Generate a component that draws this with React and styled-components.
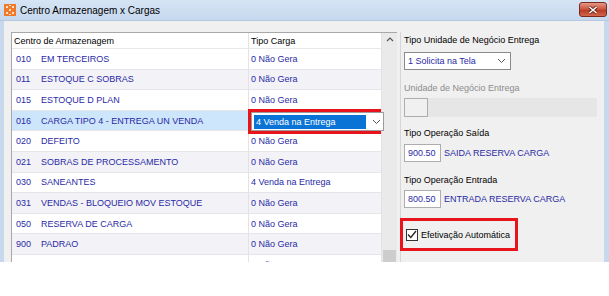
import React from "react";
import styled, { createGlobalStyle } from "styled-components";

const Global = createGlobalStyle`
  html, body {
    margin: 0;
    padding: 0;
    background: #fff;
  }
  body {
    font-family: "Liberation Sans", Arial, sans-serif;
    font-size: 9px;
  }
`;

const Window = styled.div`
  width: 609px;
  height: 262px;
  display: flex;
  flex-direction: column;
  overflow: hidden;
`;

const TitleBar = styled.div`
  height: 21px;
  flex: none;
  display: flex;
  align-items: center;
  padding: 0 2px 0 4px;
  background: linear-gradient(#d6e4f4, #c6d8ee);
  border-bottom: 1px solid #b4c8e0;
  box-sizing: border-box;
`;

const Title = styled.span`
  margin-left: 4px;
  font-size: 10px;
  color: #000;
  flex: 1;
`;

const CloseBtn = styled.div`
  width: 28px;
  height: 15px;
  border: 1px solid #7d2a1e;
  border-radius: 3px;
  box-sizing: border-box;
  background: linear-gradient(#e39a88, #c8503a 50%, #b8351f 51%, #d0674e);
  display: flex;
  align-items: center;
  justify-content: center;
  margin-top: -1px;
`;

const Frame = styled.div`
  flex: 1;
  display: flex;
  border-left: 4px solid #c8d9ee;
  border-right: 5px solid #c8d9ee;
  overflow: hidden;
`;

const Body = styled.div`
  flex: 1;
  display: flex;
  align-items: flex-start;
  background: #f0f0f0;
  padding: 11px 0 0 7px;
  overflow: hidden;
`;

const Grid = styled.div`
  width: 386px;
  height: 250px;
  flex: none;
  border: 1px solid #a8a8a8;
  box-sizing: border-box;
  background: #fff;
  display: flex;
`;

const Table = styled.div`
  flex: 1;
  display: grid;
  grid-template-columns: 236px 133px;
  grid-auto-rows: 20.6px;
  grid-template-rows: 16px;
  align-content: start;
`;

const HeadCell = styled.div`
  display: flex;
  align-items: center;
  padding-left: ${(p) => (p.$second ? "2px" : "2px")};
  color: #000;
  border-left: ${(p) => (p.$second ? "1px solid #e3e3e3" : "none")};
  border-bottom: 1px solid #e8e8e8;
`;

const Cell = styled.div`
  position: relative;
  display: flex;
  align-items: center;
  padding-left: ${(p) => (p.$second ? "2px" : "4px")};
  color: #2a2aa6;
  background: ${(p) => (p.$selected ? "#cde6fb" : p.$odd ? "#f2f2f7" : "#fff")};
  border-left: ${(p) => (p.$second ? "1px solid #e3e3e3" : "none")};
  border-bottom: 1px solid #e6e6ea;
  white-space: nowrap;
`;

const Code = styled.span`
  width: 25px;
  flex: none;
`;

const Annotation = styled.div`
  position: absolute;
  left: -1px;
  right: 0;
  top: -2px;
  bottom: -4px;
  border: 3px solid #e8141b;
  background: #fff;
  display: flex;
  align-items: center;
  z-index: 2;
`;

const ComboInner = styled.div`
  flex: 1;
  height: 100%;
  display: flex;
  align-items: center;
  padding: 0 2px;
  border: 1px solid #9c9c9c;
  box-sizing: border-box;
  background: #fff;
`;

const Highlight = styled.span`
  width: 110px;
  height: 14px;
  line-height: 14px;
  padding-left: 2px;
  background: #0a74d6;
  color: #fff;
  outline: 1px dotted #fff;
`;

const Chevron = ({ x = 0 }) => (
  <svg width="9" height="6" viewBox="0 0 9 6" style={{ marginLeft: x }}>
    <path d="M1 1 L4.5 4.5 L8 1" fill="none" stroke="#555" strokeWidth="1" />
  </svg>
);

const Scrollbar = styled.div`
  width: 15px;
  flex: none;
  background: #eaeaea;
  border-left: 1px solid #e2e2e2;
  display: flex;
  flex-direction: column;
  align-items: center;
`;

const ScrollArrow = styled.div`
  height: 17px;
  display: flex;
  align-items: center;
`;

const Thumb = styled.div`
  margin-top: 204px;
  width: 13px;
  height: 40px;
  background: #cdcdcd;
`;

const Panel = styled.div`
  flex: 1;
  margin-left: 3px;
  height: 100%;
  border-left: 1px solid #d6d6d6;
  padding: 0 0 0 3px;
  display: flex;
  flex-direction: column;
  align-items: flex-start;
`;

const Label = styled.div`
  color: ${(p) => (p.$disabled ? "#8c8c8c" : "#000")};
  margin-top: ${(p) => p.$top}px;
  height: 11px;
  line-height: 11px;
`;

const Select = styled.div`
  margin-top: 6px;
  width: 107px;
  height: 18px;
  box-sizing: border-box;
  border: 1px solid #8a8a8a;
  background: #fff;
  color: #2a2aa6;
  display: flex;
  align-items: center;
  padding: 0 4px 0 3px;
  justify-content: space-between;
`;

const FieldRow = styled.div`
  margin-top: ${(p) => p.$top}px;
  display: flex;
  align-items: center;
  align-self: stretch;
`;

const Input = styled.div`
  width: ${(p) => p.$w}px;
  height: ${(p) => p.$h}px;
  box-sizing: border-box;
  border: 1px solid #adadad;
  background: ${(p) => (p.$disabled ? "#f0f0f0" : "#fff")};
  color: #2a2aa6;
  display: flex;
  align-items: center;
  padding-left: 3px;
  flex: none;
`;

const DisabledStrip = styled.div`
  flex: none;
  width: 169px;
  height: 19px;
  background: #e6e6e6;
`;

const Desc = styled.span`
  margin-left: 3px;
  color: #2a2aa6;
`;

const CheckFrame = styled.div`
  margin-top: 10px;
  margin-left: -4px;
  width: 118px;
  height: 33px;
  box-sizing: border-box;
  border: 3px solid #e8141b;
  display: flex;
  align-items: center;
  padding-left: 3px;
  gap: 3px;
  color: #000;
`;

const Box = styled.div`
  width: 12px;
  height: 12px;
  box-sizing: border-box;
  border: 1px solid #333;
  background: #fff;
  display: flex;
  align-items: center;
  justify-content: center;
`;

const rows = [
  ["010", "EM TERCEIROS", "0 Não Gera"],
  ["011", "ESTOQUE C SOBRAS", "0 Não Gera"],
  ["015", "ESTOQUE D PLAN", "0 Não Gera"],
  ["016", "CARGA TIPO 4 - ENTREGA UN VENDA", "4 Venda na Entrega"],
  ["020", "DEFEITO", "0 Não Gera"],
  ["021", "SOBRAS DE PROCESSAMENTO", "0 Não Gera"],
  ["030", "SANEANTES", "4 Venda na Entrega"],
  ["031", "VENDAS - BLOQUEIO MOV ESTOQUE", "0 Não Gera"],
  ["050", "RESERVA DE CARGA", "0 Não Gera"],
  ["900", "PADRAO", "0 Não Gera"],
  ["", "", "0 Não Gera"],
];

const AppIcon = () => (
  <svg width="12" height="12" viewBox="0 0 12 12">
    <rect width="12" height="12" fill="#f07a2a" />
    <path d="M2 2h2v2H2zM8 2h2v2H8zM5 5h2v2H5zM2 8h2v2H2zM8 8h2v2H8zM5 1h2v1H5zM5 10h2v1H5z" fill="#fde2c8" />
  </svg>
);

export default function App() {
  return (
    <>
      <Global />
      <Window>
        <TitleBar>
          <AppIcon />
          <Title>Centro Armazenagem x Cargas</Title>
          <CloseBtn>
            <svg width="10" height="8" viewBox="0 0 10 8">
              <path d="M1.5 1 L8.5 7 M8.5 1 L1.5 7" stroke="#5a1a10" strokeWidth="3" />
              <path d="M1.5 1 L8.5 7 M8.5 1 L1.5 7" stroke="#fff" strokeWidth="1.6" />
            </svg>
          </CloseBtn>
        </TitleBar>
        <Frame>
          <Body>
            <Grid>
              <Table>
                <HeadCell>Centro de Armazenagem</HeadCell>
                <HeadCell $second>Tipo Carga</HeadCell>
                {rows.map(([code, name, tipo], i) => (
                  <React.Fragment key={i}>
                    <Cell $odd={i % 2 === 1} $selected={code === "016"}>
                      <Code>{code}</Code>
                      {name}
                    </Cell>
                    <Cell $second $odd={i % 2 === 1}>
                      {code === "016" ? (
                        <Annotation>
                          <ComboInner>
                            <Highlight>{tipo}</Highlight>
                            <Chevron x={6} />
                          </ComboInner>
                        </Annotation>
                      ) : (
                        tipo
                      )}
                    </Cell>
                  </React.Fragment>
                ))}
              </Table>
              <Scrollbar>
                <ScrollArrow>
                  <svg width="8" height="5" viewBox="0 0 8 5">
                    <path d="M1 4 L4 1 L7 4" fill="none" stroke="#555" strokeWidth="1.2" />
                  </svg>
                </ScrollArrow>
                <Thumb />
              </Scrollbar>
            </Grid>
            <Panel>
              <Label $top={3}>Tipo Unidade de Negócio Entrega</Label>
              <Select>
                <span>1 Solicita na Tela</span>
                <Chevron />
              </Select>
              <Label $disabled $top={13}>Unidade de Negócio Entrega</Label>
              <FieldRow $top={4}>
                <Input $disabled $w={24} $h={19} />
                <DisabledStrip />
              </FieldRow>
              <Label $top={11}>Tipo Operação Saída</Label>
              <FieldRow $top={5}>
                <Input $w={37} $h={18}>900.50</Input>
                <Desc>SAIDA RESERVA CARGA</Desc>
              </FieldRow>
              <Label $top={13}>Tipo Operação Entrada</Label>
              <FieldRow $top={4}>
                <Input $w={37} $h={18}>800.50</Input>
                <Desc>ENTRADA RESERVA CARGA</Desc>
              </FieldRow>
              <CheckFrame>
                <Box>
                  <svg width="10" height="9" viewBox="0 0 10 9">
                    <path d="M1 4.5 L3.8 7.5 L9 1" fill="none" stroke="#222" strokeWidth="1.3" />
                  </svg>
                </Box>
                Efetivação Automática
              </CheckFrame>
            </Panel>
          </Body>
        </Frame>
      </Window>
    </>
  );
}
